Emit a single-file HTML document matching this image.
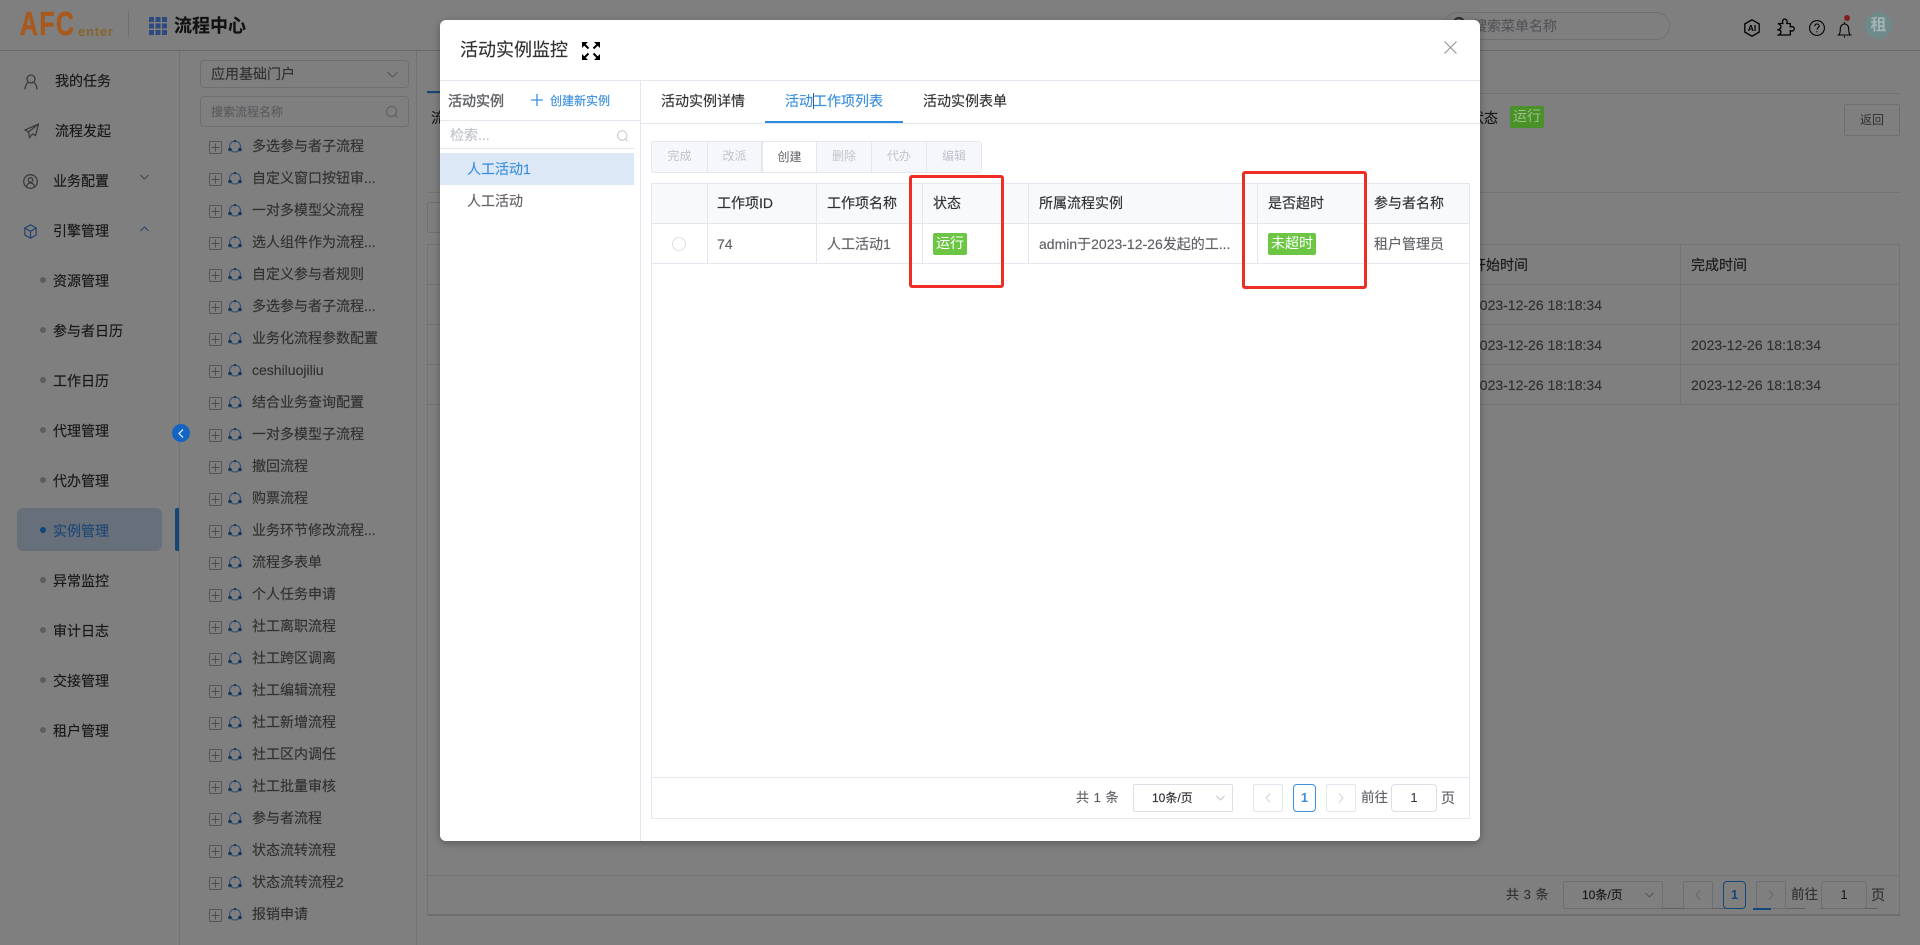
<!DOCTYPE html>
<html lang="zh-CN">
<head>
<meta charset="utf-8">
<title>活动实例监控</title>
<style>
html,body{margin:0;padding:0;width:1920px;height:945px;overflow:hidden;background:#fff}
body{font-family:"Liberation Sans","Noto Sans CJK SC",sans-serif;font-size:14px;color:#303133;position:relative}
#r{position:absolute;left:0;top:0;width:1920px;height:945px;overflow:hidden}
.a,.t,svg.i{position:absolute}
.t{line-height:20px;white-space:nowrap;-webkit-text-stroke:.15px}
.l{position:absolute;background:#e4e7ed}
.box{position:absolute;box-sizing:border-box;border:1px solid #dcdfe6;background:#fff}
.g{color:#606266}
#ov{position:absolute;left:0;top:0;width:1920px;height:945px;background:rgba(0,0,0,.5)}
#m{position:absolute;left:440px;top:20px;width:1040px;height:821px;background:#fff;border-radius:6px;box-shadow:0 2px 8px rgba(0,0,0,.3)}
.tn{left:252px;color:#606266}
.btn{position:absolute;top:141px;height:32px;line-height:31px;text-align:center;font-size:12px;color:#c0c4cc;box-sizing:border-box;border-right:1px solid #e4e7ed}
.red{position:absolute;box-sizing:border-box;border:3px solid #ee2e24;border-radius:3px}
.tag{position:absolute;height:22px;line-height:21px;text-align:center;background:#6cc644;color:#fff;border-radius:2px}
.m1{color:#303133}
.dot{position:absolute;left:40px;width:6px;height:6px;border-radius:50%;background:#bbb}
.fr{position:absolute;top:908px;height:1px;background:#c4c4c4}
</style>
</head>
<body>
<div id="r">
<svg width="0" height="0" style="position:absolute">
<defs>
<symbol id="plus" viewBox="0 0 13 13"><rect x=".5" y=".5" width="12" height="12" rx="1" fill="none" stroke="#aaa" stroke-width="1"/><path d="M6.5 2.500v8M2.500 6.500h8" stroke="#999" stroke-width="1"/></symbol>
<symbol id="flow" viewBox="0 0 14 13"><circle cx="7" cy="6.500" r="5.500" fill="none" stroke="#6ea6e0" stroke-width="1.200"/><circle cx="7" cy="1.200" r="1.200" fill="#2a6cc4"/><circle cx="2" cy="9.500" r="1.800" fill="#2a6cc4"/><circle cx="12" cy="9.500" r="1.800" fill="#2a6cc4"/></symbol>
</defs>
</svg>

<!-- header -->
<div class="l" style="left:0;top:50px;width:1920px;height:1px;background:#cfd2d8"></div>
<div class="l" style="left:128px;top:12px;width:1px;height:24px;background:#dcdfe6"></div>
<svg class="i" style="left:149px;top:17px" width="18" height="18" viewBox="0 0 18 18" fill="#5a94ff"><rect x="0" y="0" width="5" height="5"/><rect x="6.500" y="0" width="5" height="5"/><rect x="13" y="0" width="5" height="5"/><rect x="0" y="6.500" width="5" height="5"/><rect x="6.500" y="6.500" width="5" height="5"/><rect x="13" y="6.500" width="5" height="5"/><rect x="0" y="13" width="5" height="5"/><rect x="6.500" y="13" width="5" height="5"/><rect x="13" y="13" width="5" height="5"/></svg>
<div class="t" style="left:174px;top:16px;font-size:18px;font-weight:bold;color:#222">流程中心</div>
<div class="a" style="left:1443px;top:12px;width:227px;height:28px;box-sizing:border-box;border:1px solid #dcdfe6;border-radius:14px"></div>
<div class="a" style="left:1453px;top:17px;width:8px;height:8px;border-radius:50%;border:2px solid #555"></div>
<div class="t" style="left:1473px;top:16px;color:#a8abb2">搜索菜单名称</div>
<svg class="i" style="left:1743px;top:19px" width="18" height="18" viewBox="0 0 18 18" fill="none" stroke="#000" stroke-width="1.300"><path d="M9 .8l7.200 4.100v8.200L9 17.200l-7.200-4.100V4.900z"/><text x="9" y="12" text-anchor="middle" font-family="Liberation Sans,sans-serif" font-size="8.500" font-weight="bold" fill="#000" stroke="none">AI</text></svg>
<svg class="i" style="left:1777px;top:18px" width="18" height="18" viewBox="0 0 18 18" fill="none" stroke="#000" stroke-width="1.300"><path d="M1 5.500h4.800C5 2.500 6.300 1 7.800 1s2.800 1.500 2 4.500h3.500v3.300c2.500-.8 4 .5 4 2s-1.500 2.800-4 2V17H1.500c1.800-1 2.500-2 2.500-3s-1-2-2.800-2.200C3 11 4 10 4 8.800S3 6.500 1 5.500z"/></svg>
<svg class="i" style="left:1809px;top:20px" width="16" height="16" viewBox="0 0 16 16" fill="none" stroke="#000" stroke-width="1.100"><circle cx="8" cy="8" r="7.400"/><path d="M5.800 6.200C5.800 4.800 6.800 4 8 4s2.200.8 2.200 2c0 1.800-2.200 1.800-2.200 3.600"/><path d="M8 11.200v1.100"/></svg>
<svg class="i" style="left:1837px;top:20px" width="15" height="18" viewBox="0 0 15 18" fill="none" stroke="#000" stroke-width="1.100"><path d="M.5 15h14M2 15c1-1.500 1.300-3 1.300-6 0-3 1.700-5 4.200-5s4.200 2 4.200 5c0 3 .3 4.500 1.300 6"/><path d="M7.500 2v2M7.500 16v1.500"/></svg>
<div class="a" style="left:1844px;top:15px;width:6px;height:6px;border-radius:50%;background:#ff4040"></div>

<!-- sidebar -->
<div class="l" style="left:179px;top:51px;width:1px;height:894px;background:#e4e7ed"></div>
<div class="l" style="left:416px;top:51px;width:1px;height:894px;background:#e4e7ed"></div>
<svg class="i" style="left:24px;top:74px" width="14" height="16" viewBox="0 0 14 16" fill="none" stroke="#777" stroke-width="1.300"><circle cx="7" cy="5" r="4"/><path d="M1 15.500c0-4 2-6.500 3.500-7M13 15.500c0-4-2-6.500-3.500-7"/></svg>
<div class="t m1" style="left:55px;top:71px">我的任务</div>
<svg class="i" style="left:24px;top:123px" width="15" height="16" viewBox="0 0 15 16" fill="none" stroke="#777" stroke-width="1.300"><path d="M14.500 1L1 7l3.500 2 1 5.500 3-3.500 3 1.500zM14.500 1L4.500 9"/></svg>
<div class="t m1" style="left:55px;top:121px">流程发起</div>
<svg class="i" style="left:23px;top:174px" width="15" height="15" viewBox="0 0 15 15" fill="none" stroke="#777" stroke-width="1.300"><circle cx="7.500" cy="7.500" r="6.800"/><circle cx="7.500" cy="6" r="2.300"/><path d="M3.500 12.500c.5-2 2-3.500 4-3.500s3.500 1.500 4 3.500"/></svg>
<div class="t m1" style="left:53px;top:171px">业务配置</div>
<svg class="i" style="left:140px;top:174px" width="9" height="6" viewBox="0 0 9 6" fill="none" stroke="#888"><path d="M.5 1l4 4 4-4"/></svg>
<svg class="i" style="left:24px;top:224px" width="13" height="15" viewBox="0 0 13 15" fill="none" stroke="#4a86d8" stroke-width="1.200"><path d="M6.500 .8l5.700 3.200v7l-5.700 3.200L.8 11V4zM.8 4l5.700 3.300L12.200 4M6.500 7.300v6.800"/></svg>
<div class="t m1" style="left:53px;top:221px">引擎管理</div>
<svg class="i" style="left:140px;top:226px" width="9" height="6" viewBox="0 0 9 6" fill="none" stroke="#4a86d8"><path d="M.5 5l4-4 4 4"/></svg>

<div class="dot" style="top:277px"></div><div class="t m1" style="left:53px;top:271px">资源管理</div>
<div class="dot" style="top:327px"></div><div class="t m1" style="left:53px;top:321px">参与者日历</div>
<div class="dot" style="top:377px"></div><div class="t m1" style="left:53px;top:371px">工作日历</div>
<div class="dot" style="top:427px"></div><div class="t m1" style="left:53px;top:421px">代理管理</div>
<div class="dot" style="top:477px"></div><div class="t m1" style="left:53px;top:471px">代办管理</div>
<div class="a" style="left:17px;top:508px;width:145px;height:43px;background:#cfdff6;border-radius:6px"></div>
<div class="a" style="left:175px;top:508px;width:4px;height:43px;background:#2a8cf0;border-radius:2px 0 0 2px"></div>
<div class="dot" style="top:527px;background:#2a8cf0"></div><div class="t" style="left:53px;top:521px;color:#3f8ee8">实例管理</div>
<div class="dot" style="top:577px"></div><div class="t m1" style="left:53px;top:571px">异常监控</div>
<div class="dot" style="top:627px"></div><div class="t m1" style="left:53px;top:621px">审计日志</div>
<div class="dot" style="top:677px"></div><div class="t m1" style="left:53px;top:671px">交接管理</div>
<div class="dot" style="top:727px"></div><div class="t m1" style="left:53px;top:721px">租户管理</div>

<!-- tree panel -->
<div class="box" style="left:200px;top:60px;width:209px;height:28px;border-radius:4px"></div>
<div class="t g" style="left:211px;top:64px">应用基础门户</div>
<svg class="i" style="left:387px;top:71px" width="11" height="7" viewBox="0 0 11 7" fill="none" stroke="#aaa"><path d="M.5 1l5 5 5-5"/></svg>
<div class="box" style="left:200px;top:96px;width:209px;height:31px;border-radius:4px"></div>
<div class="t" style="left:211px;top:102px;font-size:12px;color:#b5b8bf">搜索流程名称</div>
<svg class="i" style="left:386px;top:106px" width="12" height="12" viewBox="0 0 12 12" fill="none" stroke="#bbb"><circle cx="5.500" cy="5.500" r="5"/><path d="M9 9l2.500 2.500"/></svg>

<svg class="i" style="left:209px;top:141px" width="13" height="13"><use href="#plus"/></svg><svg class="i" style="left:228px;top:140px" width="14" height="13"><use href="#flow"/></svg><div class="t tn" style="top:136px">多选参与者子流程</div>
<svg class="i" style="left:209px;top:173px" width="13" height="13"><use href="#plus"/></svg><svg class="i" style="left:228px;top:172px" width="14" height="13"><use href="#flow"/></svg><div class="t tn" style="top:168px">自定义窗口按钮审...</div>
<svg class="i" style="left:209px;top:205px" width="13" height="13"><use href="#plus"/></svg><svg class="i" style="left:228px;top:204px" width="14" height="13"><use href="#flow"/></svg><div class="t tn" style="top:200px">一对多模型父流程</div>
<svg class="i" style="left:209px;top:237px" width="13" height="13"><use href="#plus"/></svg><svg class="i" style="left:228px;top:236px" width="14" height="13"><use href="#flow"/></svg><div class="t tn" style="top:232px">选人组件作为流程...</div>
<svg class="i" style="left:209px;top:269px" width="13" height="13"><use href="#plus"/></svg><svg class="i" style="left:228px;top:268px" width="14" height="13"><use href="#flow"/></svg><div class="t tn" style="top:264px">自定义参与者规则</div>
<svg class="i" style="left:209px;top:301px" width="13" height="13"><use href="#plus"/></svg><svg class="i" style="left:228px;top:300px" width="14" height="13"><use href="#flow"/></svg><div class="t tn" style="top:296px">多选参与者子流程...</div>
<svg class="i" style="left:209px;top:333px" width="13" height="13"><use href="#plus"/></svg><svg class="i" style="left:228px;top:332px" width="14" height="13"><use href="#flow"/></svg><div class="t tn" style="top:328px">业务化流程参数配置</div>
<svg class="i" style="left:209px;top:365px" width="13" height="13"><use href="#plus"/></svg><svg class="i" style="left:228px;top:364px" width="14" height="13"><use href="#flow"/></svg><div class="t tn" style="top:360px">ceshiluojiliu</div>
<svg class="i" style="left:209px;top:397px" width="13" height="13"><use href="#plus"/></svg><svg class="i" style="left:228px;top:396px" width="14" height="13"><use href="#flow"/></svg><div class="t tn" style="top:392px">结合业务查询配置</div>
<svg class="i" style="left:209px;top:429px" width="13" height="13"><use href="#plus"/></svg><svg class="i" style="left:228px;top:428px" width="14" height="13"><use href="#flow"/></svg><div class="t tn" style="top:424px">一对多模型子流程</div>
<svg class="i" style="left:209px;top:461px" width="13" height="13"><use href="#plus"/></svg><svg class="i" style="left:228px;top:460px" width="14" height="13"><use href="#flow"/></svg><div class="t tn" style="top:456px">撤回流程</div>
<svg class="i" style="left:209px;top:493px" width="13" height="13"><use href="#plus"/></svg><svg class="i" style="left:228px;top:492px" width="14" height="13"><use href="#flow"/></svg><div class="t tn" style="top:488px">购票流程</div>
<svg class="i" style="left:209px;top:525px" width="13" height="13"><use href="#plus"/></svg><svg class="i" style="left:228px;top:524px" width="14" height="13"><use href="#flow"/></svg><div class="t tn" style="top:520px">业务环节修改流程...</div>
<svg class="i" style="left:209px;top:557px" width="13" height="13"><use href="#plus"/></svg><svg class="i" style="left:228px;top:556px" width="14" height="13"><use href="#flow"/></svg><div class="t tn" style="top:552px">流程多表单</div>
<svg class="i" style="left:209px;top:589px" width="13" height="13"><use href="#plus"/></svg><svg class="i" style="left:228px;top:588px" width="14" height="13"><use href="#flow"/></svg><div class="t tn" style="top:584px">个人任务申请</div>
<svg class="i" style="left:209px;top:621px" width="13" height="13"><use href="#plus"/></svg><svg class="i" style="left:228px;top:620px" width="14" height="13"><use href="#flow"/></svg><div class="t tn" style="top:616px">社工离职流程</div>
<svg class="i" style="left:209px;top:653px" width="13" height="13"><use href="#plus"/></svg><svg class="i" style="left:228px;top:652px" width="14" height="13"><use href="#flow"/></svg><div class="t tn" style="top:648px">社工跨区调离</div>
<svg class="i" style="left:209px;top:685px" width="13" height="13"><use href="#plus"/></svg><svg class="i" style="left:228px;top:684px" width="14" height="13"><use href="#flow"/></svg><div class="t tn" style="top:680px">社工编辑流程</div>
<svg class="i" style="left:209px;top:717px" width="13" height="13"><use href="#plus"/></svg><svg class="i" style="left:228px;top:716px" width="14" height="13"><use href="#flow"/></svg><div class="t tn" style="top:712px">社工新增流程</div>
<svg class="i" style="left:209px;top:749px" width="13" height="13"><use href="#plus"/></svg><svg class="i" style="left:228px;top:748px" width="14" height="13"><use href="#flow"/></svg><div class="t tn" style="top:744px">社工区内调任</div>
<svg class="i" style="left:209px;top:781px" width="13" height="13"><use href="#plus"/></svg><svg class="i" style="left:228px;top:780px" width="14" height="13"><use href="#flow"/></svg><div class="t tn" style="top:776px">社工批量审核</div>
<svg class="i" style="left:209px;top:813px" width="13" height="13"><use href="#plus"/></svg><svg class="i" style="left:228px;top:812px" width="14" height="13"><use href="#flow"/></svg><div class="t tn" style="top:808px">参与者流程</div>
<svg class="i" style="left:209px;top:845px" width="13" height="13"><use href="#plus"/></svg><svg class="i" style="left:228px;top:844px" width="14" height="13"><use href="#flow"/></svg><div class="t tn" style="top:840px">状态流转流程</div>
<svg class="i" style="left:209px;top:877px" width="13" height="13"><use href="#plus"/></svg><svg class="i" style="left:228px;top:876px" width="14" height="13"><use href="#flow"/></svg><div class="t tn" style="top:872px">状态流转流程2</div>
<svg class="i" style="left:209px;top:909px" width="13" height="13"><use href="#plus"/></svg><svg class="i" style="left:228px;top:908px" width="14" height="13"><use href="#flow"/></svg><div class="t tn" style="top:904px">报销申请</div>

<!-- main background content -->
<div class="l" style="left:427px;top:93px;width:1473px;height:1px"></div>
<div class="a" style="left:427px;top:91px;width:60px;height:2px;background:#2a8cf0"></div>
<div class="t m1" style="left:431px;top:108px">流</div>
<div class="t m1" style="left:1470px;top:108px">状态</div>
<div class="box" style="left:1844px;top:104px;width:56px;height:32px;line-height:30px;text-align:center;font-size:12px;color:#606266;border-radius:2px">返回</div>
<div class="l" style="left:427px;top:192px;width:1473px;height:1px"></div>
<div class="a" style="left:427px;top:202px;width:60px;height:31px;box-sizing:border-box;border:1px solid #dcdfe6;border-radius:3px"></div>
<div class="a" style="left:427px;top:244px;width:1473px;height:672px;box-sizing:border-box;border:1px solid #e4e7ed;border-bottom:2px solid #d8dade"></div>
<div class="l" style="left:427px;top:284px;width:1473px;height:1px"></div>
<div class="l" style="left:427px;top:324px;width:1473px;height:1px"></div>
<div class="l" style="left:427px;top:364px;width:1473px;height:1px"></div>
<div class="l" style="left:427px;top:404px;width:1473px;height:1px"></div>
<div class="l" style="left:427px;top:875px;width:1473px;height:1px"></div>
<div class="l" style="left:1680px;top:244px;width:1px;height:160px"></div>
<div class="t m1" style="left:1472px;top:255px">开始时间</div>
<div class="t m1" style="left:1691px;top:255px">完成时间</div>
<div class="t g" style="left:1472px;top:295px">2023-12-26 18:18:34</div>
<div class="t g" style="left:1472px;top:335px">2023-12-26 18:18:34</div>
<div class="t g" style="left:1691px;top:335px">2023-12-26 18:18:34</div>
<div class="t g" style="left:1472px;top:375px">2023-12-26 18:18:34</div>
<div class="t g" style="left:1691px;top:375px">2023-12-26 18:18:34</div>
<div class="fr" style="left:1590px;width:100px"></div>
<div class="fr" style="left:1711px;width:29px"></div>
<div class="fr" style="left:1786px;width:19px"></div>
<div class="fr" style="left:1820px;width:18px"></div>
<div class="fr" style="left:1850px;width:28px"></div>
<div class="t g" style="left:1506px;top:885px;font-size:13px;word-spacing:1px">共 3 条</div>
<div class="box" style="left:1563px;top:881px;width:100px;height:28px;border-radius:2px"></div>
<div class="t" style="left:1582px;top:885px;font-size:12px">10条/页</div>
<svg class="i" style="left:1645px;top:892px" width="9" height="6" viewBox="0 0 9 6" fill="none" stroke="#aaa"><path d="M.5 1l4 4 4-4"/></svg>
<div class="box" style="left:1683px;top:881px;width:30px;height:28px;border-radius:2px"></div>
<svg class="i" style="left:1695px;top:890px" width="6" height="10" viewBox="0 0 6 10" fill="none" stroke="#ccc"><path d="M5 .5L1 5l4 4.500"/></svg>
<div class="box" style="left:1723px;top:881px;width:23px;height:28px;border:1px solid #2a8cf0;border-radius:4px;color:#2a8cf0;font-weight:bold;font-size:13px;line-height:26px;text-align:center">1</div>
<div class="box" style="left:1756px;top:881px;width:30px;height:28px;border-radius:2px"></div>
<svg class="i" style="left:1768px;top:890px" width="6" height="10" viewBox="0 0 6 10" fill="none" stroke="#ccc"><path d="M1 .5L5 5 1 9.500"/></svg>
<div class="t g" style="left:1791px;top:885px;font-size:13.500px">前往</div>
<div class="box" style="left:1821px;top:881px;width:46px;height:28px;border-radius:4px;line-height:26px;text-align:center;font-size:13px">1</div>
<div class="t g" style="left:1871px;top:885px">页</div>
<div class="a" style="left:1753px;top:908px;width:18px;height:2px;background:#2a8cf0"></div>

<div id="ov"></div>

<!-- above overlay: exact dimmed colours -->
<div class="a" style="left:20px;top:3px;font-size:33px;line-height:42px;color:#a85a1e;-webkit-text-stroke:.6px #a85a1e;transform:scaleX(.75);transform-origin:0 0;font-weight:bold;letter-spacing:2px">AFC</div>
<div class="a" style="left:78px;top:24px;font-size:13px;line-height:16px;color:#86652a;font-weight:bold;letter-spacing:.8px">enter</div>
<div class="a" style="left:172px;top:424px;width:18px;height:18px;border-radius:50%;background:#1565c0"></div>
<svg class="i" style="left:178px;top:429px" width="6" height="9" viewBox="0 0 6 9" fill="none" stroke="#cfe2f8" stroke-width="1.300"><path d="M5 .5L1 4.500 5 8.500"/></svg>
<div class="a" style="left:1865px;top:12px;width:27px;height:27px;border-radius:50%;background:#6e8a8a;color:#a2b4b4;font-weight:bold;font-size:16px;line-height:27px;text-align:center">租</div>
<div class="a" style="left:1510px;top:106px;width:34px;height:22px;background:#4a912a;color:#9cc088;text-align:center;line-height:21px;border-radius:2px">运行</div>

<!-- modal -->
<div id="m"></div>
<div class="t" style="left:460px;top:38px;font-size:18px;line-height:24px;color:#303133">活动实例监控</div>
<svg class="i" style="left:582px;top:42px" width="18" height="18" viewBox="0 0 18 18"><g fill="#000"><path d="M0 0h6L0 6z"/><path d="M18 0h-6l6 6z"/><path d="M0 18h6l-6-6z"/><path d="M18 18h-6l6-6z"/></g><g stroke="#000" stroke-width="2"><path d="M2 2l4.500 4.500M16 2l-4.500 4.500M2 16l4.500-4.500M16 16l-4.500-4.500"/></g></svg>
<svg class="i" style="left:1444px;top:41px" width="13" height="13" viewBox="0 0 13 13" stroke="#909399" stroke-width="1.100"><path d="M.5.5l12 12M12.500.5l-12 12"/></svg>
<div class="l" style="left:440px;top:80px;width:1040px;height:1px"></div>
<div class="l" style="left:640px;top:81px;width:1px;height:760px"></div>

<!-- left list -->
<div class="t" style="left:448px;top:91px;color:#606266;-webkit-text-stroke:.4px #606266">活动实例</div>
<svg class="i" style="left:531px;top:94px" width="12" height="12" viewBox="0 0 12 12" stroke="#3c8fdd" stroke-width="1.300"><path d="M6 0v12M0 6h12"/></svg>
<div class="t" style="left:550px;top:91px;font-size:12px;color:#3c8fdd">创建新实例</div>
<div class="l" style="left:440px;top:120px;width:200px;height:1px"></div>
<div class="t" style="left:450px;top:125px;color:#c0c4cc">检索...</div>
<svg class="i" style="left:617px;top:130px" width="11" height="12" viewBox="0 0 11 12" fill="none" stroke="#c0c4cc"><circle cx="5.200" cy="5.500" r="4.700"/><path d="M8.500 9l2 2"/></svg>
<div class="l" style="left:440px;top:148px;width:194px;height:1px"></div>
<div class="a" style="left:440px;top:153px;width:194px;height:32px;background:#dce8f5"></div>
<div class="t" style="left:467px;top:159px;color:#3c8fdd">人工活动1</div>
<div class="t g" style="left:467px;top:191px">人工活动</div>

<!-- tabs -->
<div class="t" style="left:661px;top:91px">活动实例详情</div>
<div class="t" style="left:785px;top:91px;color:#3c8fdd">活动工作项列表</div>
<div class="t" style="left:923px;top:91px">活动实例表单</div>
<div class="l" style="left:641px;top:123px;width:839px;height:1px"></div>
<div class="a" style="left:765px;top:121px;width:138px;height:2px;background:#2d8ce0"></div>
<div class="a" style="left:813px;top:93px;width:1px;height:16px;background:#2a5db0"></div>

<!-- toolbar -->
<div class="a" style="left:651px;top:141px;width:331px;height:32px;background:#f5f7fa;border-radius:3px;box-sizing:border-box;border:1px solid #e4e7ed"></div>
<div class="btn" style="left:652px;width:56px">完成</div>
<div class="btn" style="left:708px;width:54px">改派</div>
<div class="btn" style="left:762px;width:55px;background:#fff;color:#606266;border-bottom:1px solid #e4e7ed;border-top:1px solid #e4e7ed;border-left:1px solid #e4e7ed">创建</div>
<div class="btn" style="left:817px;width:55px">删除</div>
<div class="btn" style="left:872px;width:55px">代办</div>
<div class="btn" style="left:927px;width:54px;border-right:0">编辑</div>

<!-- table -->
<div class="a" style="left:651px;top:183px;width:819px;height:636px;box-sizing:border-box;border:1px solid #e4e7ed"></div>
<div class="a" style="left:652px;top:184px;width:817px;height:39px;background:#f8f9fb"></div>
<div class="l" style="left:651px;top:223px;width:819px;height:1px"></div>
<div class="l" style="left:651px;top:263px;width:819px;height:1px"></div>
<div class="l" style="left:707px;top:183px;width:1px;height:80px"></div>
<div class="l" style="left:816px;top:183px;width:1px;height:80px"></div>
<div class="l" style="left:922px;top:183px;width:1px;height:80px"></div>
<div class="l" style="left:1028px;top:183px;width:1px;height:80px"></div>
<div class="l" style="left:1257px;top:183px;width:1px;height:80px"></div>
<div class="l" style="left:1364px;top:183px;width:1px;height:80px"></div>
<div class="t" style="left:717px;top:193px">工作项ID</div>
<div class="t" style="left:827px;top:193px">工作项名称</div>
<div class="t" style="left:933px;top:193px">状态</div>
<div class="t" style="left:1039px;top:193px">所属流程实例</div>
<div class="t" style="left:1268px;top:193px">是否超时</div>
<div class="t" style="left:1374px;top:193px">参与者名称</div>
<div class="a" style="left:672px;top:237px;width:14px;height:14px;border-radius:50%;box-sizing:border-box;border:1px solid #dcdfe6"></div>
<div class="t g" style="left:717px;top:234px">74</div>
<div class="t g" style="left:827px;top:234px">人工活动1</div>
<div class="tag" style="left:933px;top:233px;width:34px">运行</div>
<div class="t g" style="left:1039px;top:234px">admin于2023-12-26发起的工...</div>
<div class="tag" style="left:1268px;top:233px;width:48px">未超时</div>
<div class="t g" style="left:1374px;top:234px">租户管理员</div>

<!-- red boxes -->
<div class="red" style="left:909px;top:175px;width:95px;height:113px"></div>
<div class="red" style="left:1242px;top:171px;width:125px;height:118px"></div>

<!-- modal pagination -->
<div class="l" style="left:651px;top:777px;width:819px;height:1px"></div>
<div class="t g" style="left:1076px;top:788px;font-size:13px;word-spacing:1px">共 1 条</div>
<div class="box" style="left:1133px;top:784px;width:100px;height:28px;border-radius:2px"></div>
<div class="t" style="left:1152px;top:788px;font-size:12px;color:#303133">10条/页</div>
<svg class="i" style="left:1216px;top:795px" width="9" height="6" viewBox="0 0 9 6" fill="none" stroke="#c0c4cc"><path d="M.5 1l4 4 4-4"/></svg>
<div class="box" style="left:1253px;top:784px;width:30px;height:28px;border-color:#e4e7ed;border-radius:2px"></div>
<svg class="i" style="left:1265px;top:793px" width="6" height="10" viewBox="0 0 6 10" fill="none" stroke="#d0d3d9"><path d="M5 .5L1 5l4 4.500"/></svg>
<div class="box" style="left:1293px;top:784px;width:23px;height:28px;border:1px solid #3c8fdd;border-radius:4px;color:#3c8fdd;font-weight:bold;font-size:13px;line-height:26px;text-align:center">1</div>
<div class="box" style="left:1326px;top:784px;width:30px;height:28px;border-color:#e4e7ed;border-radius:2px"></div>
<svg class="i" style="left:1338px;top:793px" width="6" height="10" viewBox="0 0 6 10" fill="none" stroke="#d0d3d9"><path d="M1 .5L5 5 1 9.500"/></svg>
<div class="t g" style="left:1361px;top:788px;font-size:13.500px">前往</div>
<div class="box" style="left:1391px;top:784px;width:46px;height:28px;border-radius:4px;line-height:26px;text-align:center;font-size:13px;color:#303133">1</div>
<div class="t g" style="left:1441px;top:788px">页</div>
</div>
</body>
</html>
